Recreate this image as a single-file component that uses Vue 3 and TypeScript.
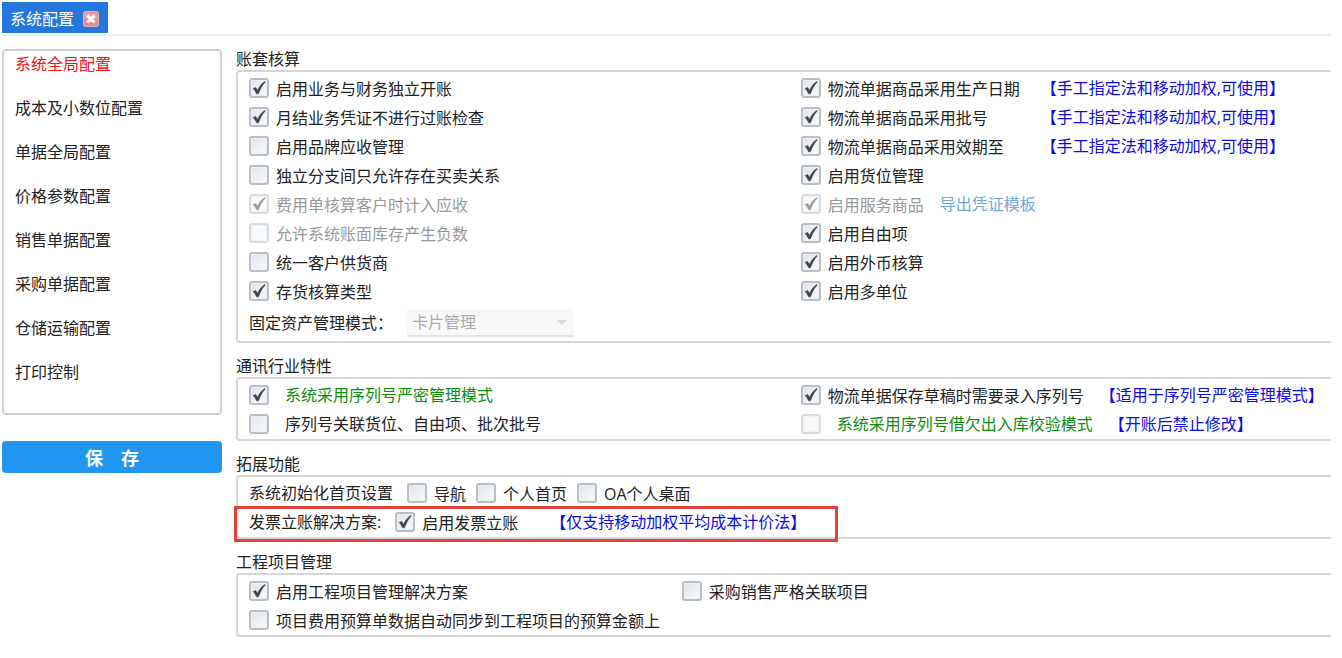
<script setup lang="ts">
import { computed, ref } from 'vue'

interface Option {
  label: string
  checked?: boolean
  disabled?: boolean
  note?: string
  link?: string
  green?: boolean
  indent?: boolean
  wide?: boolean
}

interface Section {
  title: string
  kind: 'accounting' | 'telecom' | 'extend' | 'project'
  columns: Option[][]
}

const menu = [
  '系统全局配置',
  '成本及小数位配置',
  '单据全局配置',
  '价格参数配置',
  '销售单据配置',
  '采购单据配置',
  '仓储运输配置',
  '打印控制',
]
const active = ref(0)
const assetMode = ref('卡片管理')
const costNote = '【手工指定法和移动加权,可使用】'

const sections = ref<Section[]>([
  {
    title: '账套核算',
    kind: 'accounting',
    columns: [
      [
        { label: '启用业务与财务独立开账', checked: true },
        { label: '月结业务凭证不进行过账检查', checked: true },
        { label: '启用品牌应收管理' },
        { label: '独立分支间只允许存在买卖关系' },
        { label: '费用单核算客户时计入应收', checked: true, disabled: true },
        { label: '允许系统账面库存产生负数', disabled: true },
        { label: '统一客户供货商' },
        { label: '存货核算类型', checked: true },
      ],
      [
        { label: '物流单据商品采用生产日期', checked: true, note: costNote, wide: true },
        { label: '物流单据商品采用批号', checked: true, note: costNote, wide: true },
        { label: '物流单据商品采用效期至', checked: true, note: costNote, wide: true },
        { label: '启用货位管理', checked: true },
        { label: '启用服务商品', checked: true, disabled: true, link: '导出凭证模板' },
        { label: '启用自由项', checked: true },
        { label: '启用外币核算', checked: true },
        { label: '启用多单位', checked: true },
      ],
    ],
  },
  {
    title: '通讯行业特性',
    kind: 'telecom',
    columns: [
      [
        { label: '系统采用序列号严密管理模式', checked: true, green: true, indent: true },
        { label: '序列号关联货位、自由项、批次批号', indent: true },
      ],
      [
        { label: '物流单据保存草稿时需要录入序列号', checked: true, note: '【适用于序列号严密管理模式】' },
        { label: '系统采用序列号借欠出入库校验模式', disabled: true, green: true, indent: true, note: '【开账后禁止修改】' },
      ],
    ],
  },
  {
    title: '拓展功能',
    kind: 'extend',
    columns: [
      [{ label: '导航' }, { label: '个人首页' }, { label: 'OA个人桌面' }],
      [{ label: '启用发票立账', checked: true, note: '【仅支持移动加权平均成本计价法】' }],
    ],
  },
  {
    title: '工程项目管理',
    kind: 'project',
    columns: [
      [
        { label: '启用工程项目管理解决方案', checked: true },
        { label: '项目费用预算单数据自动同步到工程项目的预算金额上' },
      ],
      [{ label: '采购销售严格关联项目' }],
    ],
  },
])

const leads = computed(() => ['系统初始化首页设置', '发票立账解决方案:'])
</script>

<template>
  <div class="page">
    <header class="tabs">
      <div class="tab">
        <span>系统配置</span>
        <button class="close" type="button" aria-label="关闭">
          <svg viewBox="0 0 16 16" width="16" height="16">
            <rect x="0.5" y="0.5" width="15" height="15" rx="2" fill="#dd8f96" stroke="#e9b3b9" />
            <rect x="2" y="2" width="12" height="6" fill="#e6a6a9" />
            <path d="M4.5 4.5 11.5 11.5M11.5 4.5 4.5 11.5" stroke="#fff" stroke-width="3" />
          </svg>
        </button>
      </div>
    </header>

    <div class="body">
      <aside class="side">
        <nav class="menu">
          <a
            v-for="(item, i) in menu"
            :key="item"
            href="#"
            :class="{ active: i === active }"
            @click.prevent="active = i"
          >{{ item }}</a>
        </nav>
        <button class="save" type="button">保　存</button>
      </aside>

      <main class="main">
        <section v-for="s in sections" :key="s.title">
          <h2>{{ s.title }}</h2>
          <div class="box">
            <div class="columns" :class="s.kind">
              <div v-for="(col, c) in s.columns" :key="c" class="column">
                <span v-if="s.kind === 'extend'" class="lead">{{ leads[c] }}</span>
                <div v-for="o in col" :key="o.label" class="row">
                  <label :class="{ disabled: o.disabled, green: o.green, indent: o.indent, wide: o.wide }">
                    <span class="check">
                      <input v-model="o.checked" type="checkbox" :disabled="o.disabled" />
                      <svg viewBox="0 0 20 20" width="20" height="20" aria-hidden="true">
                        <path d="M4.2 10.6 6.6 9.4 8.6 12.4C10.2 8.6 12.4 5.6 15.8 3.4L16.2 4C13.2 7.4 11.2 11 9.4 15.8L7.6 15.8C6.8 13.8 5.6 12 4.2 10.6Z" />
                      </svg>
                    </span>
                    <span class="text">{{ o.label }}</span>
                  </label>
                  <span v-if="o.note" class="note">{{ o.note }}</span>
                  <a v-if="o.link" class="export" href="#" @click.prevent>{{ o.link }}</a>
                </div>
              </div>
            </div>
            <div v-if="s.kind === 'accounting'" class="mode">
              <label for="asset-mode">固定资产管理模式：</label>
              <span class="picker">
                <select id="asset-mode" v-model="assetMode" disabled>
                  <option>卡片管理</option>
                </select>
                <svg viewBox="0 0 10 6" width="10" height="6" aria-hidden="true">
                  <path d="M0 0H10L5 5Z" fill="#d6d6d6" />
                </svg>
              </span>
            </div>
          </div>
        </section>
      </main>
    </div>
  </div>
</template>

<style>
body {
  margin: 0;
  background: #fff;
}
</style>

<style scoped>
.page {
  padding: 2px 11px 16px 2px;
  font-family: "Open Sans", "Noto Sans CJK SC", sans-serif;
  font-size: 16px;
  line-height: 22px;
  color: #222;
  white-space: nowrap;
}
.page * {
  box-sizing: border-box;
}
.tabs {
  display: flex;
  padding-bottom: 1px;
  border-bottom: 2px solid #eceef2;
}
.tab {
  display: flex;
  align-items: center;
  gap: 9px;
  height: 31px;
  padding: 3px 9px 0 8px;
  background: #2478dc;
  color: #fff;
}
.close {
  display: block;
  width: 16px;
  height: 16px;
  padding: 0;
  border: 0;
  background: none;
}
.close svg {
  display: block;
}
.body {
  display: flex;
  align-items: flex-start;
  gap: 14px;
  padding-top: 12px;
}
.side {
  flex: none;
  width: 220px;
  padding-top: 1px;
}
.menu {
  display: flex;
  flex-direction: column;
  gap: 22px;
  padding: 2px 11px 30px;
  border: 2px solid #d2d2d2;
  border-radius: 4px;
}
.menu a {
  color: #222;
  text-decoration: none;
}
.menu a.active {
  color: #f01414;
}
.save {
  display: block;
  width: 100%;
  height: 32px;
  margin-top: 26px;
  padding: 0;
  border: 0;
  border-radius: 4px;
  background: #2196f3;
  color: #fff;
  font: bold 18px/32px "Noto Sans CJK SC", sans-serif;
}
.main {
  flex: 1;
  min-width: 0;
  display: flex;
  flex-direction: column;
  gap: 12px;
}
h2 {
  margin: 0;
  font-size: 16px;
  font-weight: normal;
  line-height: 22px;
}
.box {
  padding: 1px 0 1px 11px;
  border: 2px solid #d6d6d6;
  border-right: 0;
  border-radius: 4px 0 0 4px;
}
.columns {
  display: grid;
  grid-template-columns: 51% 49%;
}
.columns.project {
  grid-template-columns: 40% 60%;
}
.columns.extend {
  grid-template-columns: 1fr;
}
.row {
  display: flex;
  align-items: center;
  gap: 16px;
  height: 29px;
}
.row label {
  display: flex;
  align-items: center;
  gap: 7px;
}
.row label.wide {
  min-width: 224px;
}
.row label.indent {
  gap: 16px;
}
.text {
  padding-top: 2px;
}
.indent .text {
  padding-top: 0;
}
.check {
  display: grid;
  width: 20px;
  height: 20px;
}
.check > * {
  grid-area: 1 / 1;
}
.check input {
  appearance: none;
  width: 20px;
  height: 20px;
  margin: 0;
  border: 2px solid #b9bfc5;
  border-radius: 3px;
  background: linear-gradient(135deg, #dfe4ea, #fafcfd);
  box-shadow: inset 0 0 0 1px #eef1f4;
}
.check svg {
  display: none;
  fill: #3c434a;
  stroke: #3c434a;
  stroke-width: 0.6;
  pointer-events: none;
}
.check input:checked + svg {
  display: block;
}
.disabled {
  color: #999;
}
.disabled .check input {
  border-color: #d9dcde;
  background: #f8f9fa;
}
.disabled .check svg {
  fill: #999;
  stroke: #999;
}
.green {
  color: #0d8c0d;
}
.note {
  color: #0c0ce6;
}
.export {
  color: #6fa8dc;
  text-decoration: none;
}
.extend .column {
  position: relative;
  display: flex;
  align-items: center;
  gap: 10px;
}
.extend .lead {
  margin-right: 4px;
}
.extend .column:last-child .row {
  gap: 32px;
}
.extend .column:last-child {
  justify-self: start;
  padding-right: 32px;
}
.extend .column:last-child::after {
  content: "";
  position: absolute;
  inset: -1px 0 -6px -15px;
  border: 3px solid #e0403c;
  pointer-events: none;
}
.mode {
  display: flex;
  align-items: center;
  gap: 14px;
  height: 35px;
}
.picker {
  display: grid;
  align-items: center;
  width: 167px;
}
.picker > * {
  grid-area: 1 / 1;
}
.picker select {
  appearance: none;
  width: 100%;
  height: 28px;
  padding: 0 5px;
  border: 0;
  border-bottom: 2px solid #e4e4e4;
  border-radius: 0;
  background: #f8f8f8;
  color: #aaa;
  font: inherit;
  opacity: 1;
}
.picker svg {
  justify-self: end;
  margin-right: 7px;
  pointer-events: none;
}
</style>
